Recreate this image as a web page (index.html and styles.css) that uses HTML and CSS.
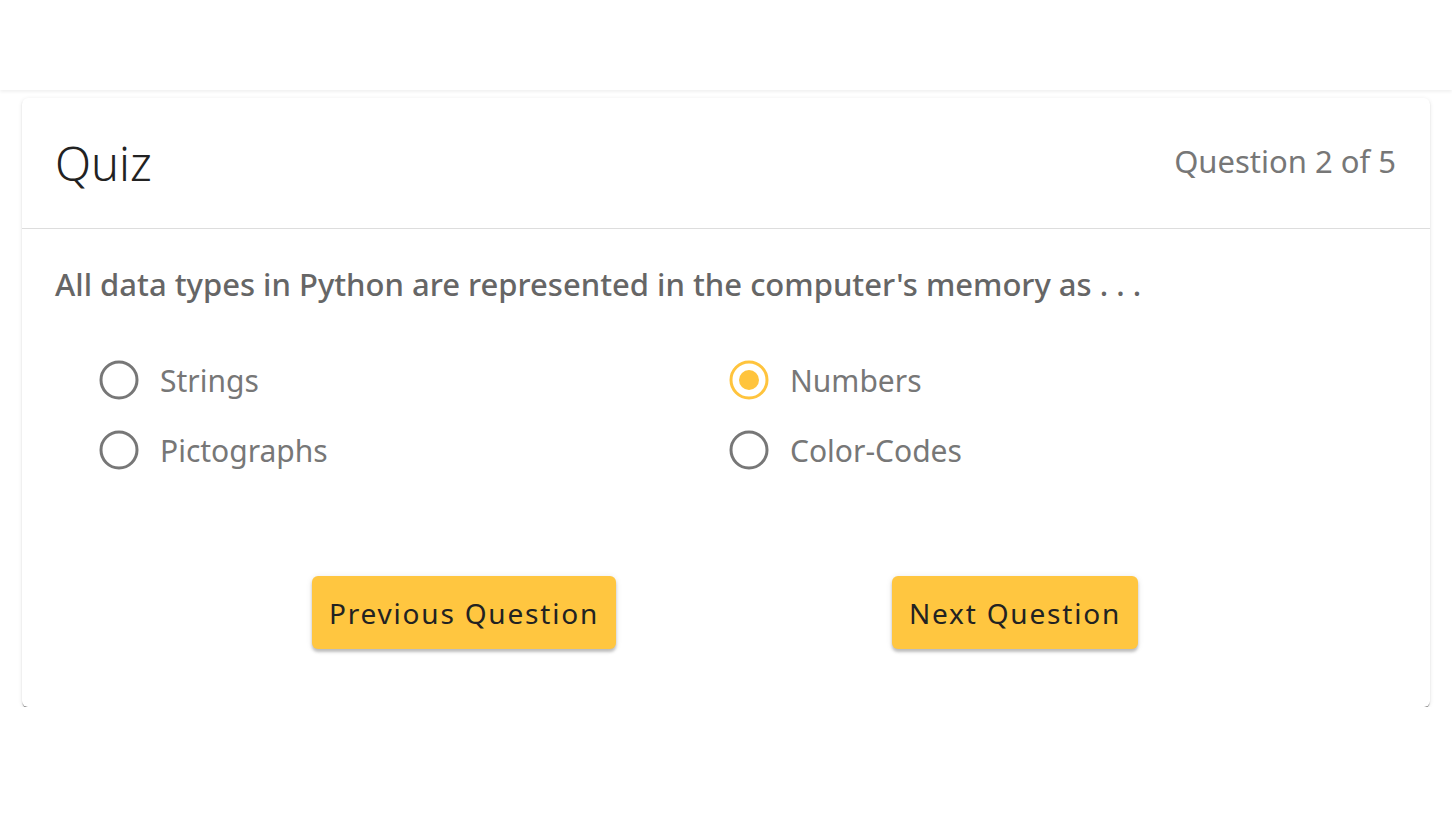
FILE: index.html
```html
<!DOCTYPE html>
<html lang="en">
<head>
<meta charset="utf-8">
<title>Quiz</title>
<link rel="stylesheet" href="styles.css">
</head>
<body>
<header class="topbar"></header>
<main class="page">
  <section class="card">
    <div class="card-head">
      <h1 class="title">Quiz</h1>
      <span class="counter">Question 2 of 5</span>
    </div>
    <div class="card-body">
      <p class="question">All data types in Python are represented in the computer's memory as . . .</p>
      <div class="options">
        <label class="option">
          <svg class="radio" viewBox="0 0 40 40" width="40" height="40"><circle cx="20" cy="20" r="18" fill="none" stroke="#777" stroke-width="3"/></svg>
          <span>Strings</span>
        </label>
        <label class="option">
          <svg class="radio" viewBox="0 0 40 40" width="40" height="40"><circle cx="20" cy="20" r="18" fill="none" stroke="#FFC43D" stroke-width="3"/><circle cx="20" cy="20" r="10" fill="#FFC43D"/></svg>
          <span>Numbers</span>
        </label>
        <label class="option">
          <svg class="radio" viewBox="0 0 40 40" width="40" height="40"><circle cx="20" cy="20" r="18" fill="none" stroke="#777" stroke-width="3"/></svg>
          <span>Pictographs</span>
        </label>
        <label class="option">
          <svg class="radio" viewBox="0 0 40 40" width="40" height="40"><circle cx="20" cy="20" r="18" fill="none" stroke="#777" stroke-width="3"/></svg>
          <span>Color-Codes</span>
        </label>
      </div>
      <div class="actions">
        <button class="btn btn-prev">Previous Question</button>
        <button class="btn btn-next">Next Question</button>
      </div>
    </div>
  </section>
</main>
</body>
</html>
```
FILE: styles.css
```css
html, body {
  margin: 0;
  padding: 0;
  background: #fff;
  font-family: "Noto Sans", "Open Sans", sans-serif;
}
.topbar {
  height: 90px;
  background: #fff;
  box-shadow: 0 2px 3px rgba(0,0,0,0.06);
}
.page {
  padding: 8px 22px 0 22px;
}
.card {
  background: #fff;
  border-radius: 6px;
  box-shadow: 0 2px 1px -1px rgba(0,0,0,0.5), 0 1px 1px 0 rgba(0,0,0,0.2), 0 1px 4px 0 rgba(0,0,0,0.1);
}
.card-head {
  height: 131px;
  box-sizing: border-box;
  border-bottom: 1px solid #ddd;
  padding: 0 34px 0 33px;
  display: flex;
  align-items: center;
  justify-content: space-between;
}
.title {
  margin: 0;
  font-size: 47px;
  font-weight: 300;
  color: #222;
  line-height: 60px;
}
.counter {
  font-size: 31px;
  color: #777;
  line-height: 40px;
  padding-bottom: 4px;
}
.card-body {
  padding: 35px 33px 58px 33px;
}
.question {
  margin: 0;
  font-size: 31px;
  line-height: 40px;
  color: #666;
  font-weight: 500;
}
.options {
  margin-top: 41px;
  padding-left: 44px;
  display: grid;
  grid-template-columns: 630px 630px;
}
.option {
  height: 70px;
  display: flex;
  align-items: center;
  gap: 21px;
  font-size: 30px;
  color: #777;
}
.radio {
  display: block;
  flex: none;
}
.actions {
  margin-top: 91px;
  display: flex;
  padding-left: 257px;
  gap: 276px;
}
.btn {
  height: 73px;
  border: none;
  border-radius: 6px;
  background: #FFC640;
  color: #222;
  font-family: "Noto Sans", "Open Sans", sans-serif;
  font-size: 28px;
  letter-spacing: 1.8px;
  padding: 0;
  box-shadow: 0 3px 3px rgba(0,0,0,0.22), 0 1px 6px rgba(0,0,0,0.1);
}
.btn-prev { width: 304px; }
.btn-next { width: 246px; }
```
